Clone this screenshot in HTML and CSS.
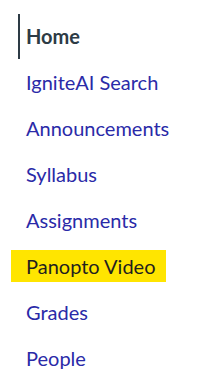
FILE: index.html
```html
<!DOCTYPE html>
<html lang="en">
<head>
    <meta charset="UTF-8">
    <meta name="viewport" content="width=device-width, initial-scale=1.0">
    <title>Course Navigation</title>
    <link rel="stylesheet" href="styles.css">
</head>
<body>
    <nav class="course-nav">
        <ul>
            <li><a href="#" class="active">Home</a></li>
            <li><a href="#">IgniteAI Search</a></li>
            <li><a href="#">Announcements</a></li>
            <li><a href="#">Syllabus</a></li>
            <li><a href="#">Assignments</a></li>
            <li><a href="#"><span class="highlight">Panopto Video</span></a></li>
            <li><a href="#">Grades</a></li>
            <li><a href="#">People</a></li>
        </ul>
    </nav>
</body>
</html>
```

FILE: styles.css
```css
* {
    margin: 0px;
    padding: 0px;
    box-sizing: border-box;
}

body {
    background-color: #ffffff;
    font-family: Lato, "Liberation Sans", sans-serif;
}

.course-nav ul {
    list-style: none;
    padding-top: 14px;
    padding-left: 18px;
}

.course-nav li {
    margin-bottom: 1px;
}

.course-nav a {
    display: block;
    border-left: 2px solid transparent;
    padding: 10px 6px;
    font-size: 20px;
    line-height: 25px;
    color: #2a2aa8;
    text-decoration: none;
}

.course-nav a.active {
    border-left-color: #2d3b45;
    color: #2d3b45;
    font-weight: bold;
}

.highlight {
    display: inline-block;
    background-color: #ffe500;
    color: #1f1f1f;
    margin: -4px 0 -4px -15px;
    padding: 4px 10px 4px 15px;
    line-height: 24px;
}
```
